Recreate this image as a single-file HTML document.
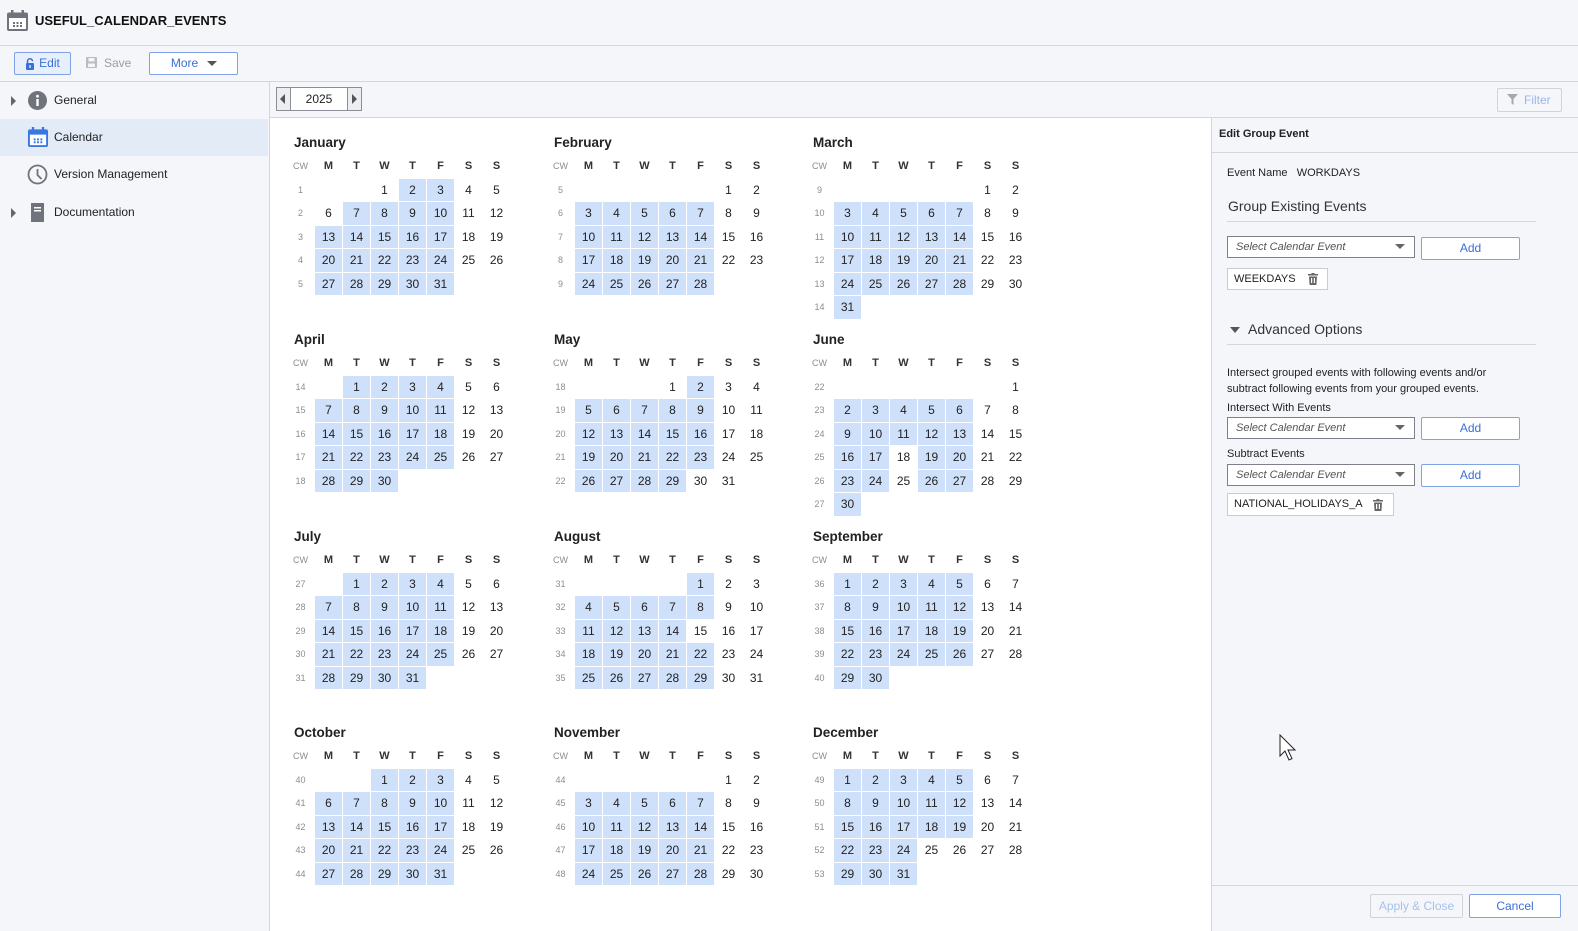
<!DOCTYPE html>
<html><head><meta charset="utf-8">
<style>
*{box-sizing:border-box;margin:0;padding:0}
body{width:1578px;height:931px;overflow:hidden;font-family:"Liberation Sans",sans-serif;color:#222;background:#fff;position:relative;font-size:12px}
.abs{position:absolute}
#top{left:0;top:0;width:1578px;height:46px;background:#f5f6fa;border-bottom:1px solid #d3d6de}
#tb{left:0;top:46px;width:1578px;height:36px;background:#f5f6fa;border-bottom:1px solid #d3d6de}
#side{left:0;top:82px;width:270px;height:849px;background:#f5f6fa;border-right:1px solid #d3d6de}
#strip{left:270px;top:82px;width:1308px;height:36px;background:#f5f6fa;border-bottom:1px solid #d3d6de}
#rp{left:1211px;top:118px;width:367px;height:813px;background:#f5f6fa;border-left:1px solid #d3d6de}
.btn{position:absolute;border:1px solid #7fa3e6;border-radius:2px;background:#fff;color:#3a6fd8;font-size:12px;text-align:center}
.m{position:absolute;width:230px}
.m h3{font-size:13.5px;font-weight:bold;height:20px;line-height:20px;padding-left:7px;color:#222}
.g{display:grid;grid-template-columns:repeat(8,27px);grid-auto-rows:22.5px;gap:1px;margin-top:2px}
.g i,.g em,.g b,.g a{display:block;text-align:center;line-height:22.5px;font-style:normal}
.g i{font-size:9px;color:#8a8d93}
.g em{font-size:11px;font-weight:bold;color:#333}
.g b{font-weight:normal;font-size:12px}
.g a{background:#cfe0fb;font-size:12px;color:#222}
.side-item{position:absolute;left:0;width:268px;height:37px;font-size:12px;line-height:37px;color:#222}
.sel{position:absolute;left:1227px;width:188px;height:22px;border:1px solid #7d8089;background:#fff;font-style:italic;font-size:11px;color:#555;padding-left:8px;line-height:20px}
.sel:after{content:"";position:absolute;right:9px;top:7px;border-left:5px solid transparent;border-right:5px solid transparent;border-top:5px solid #666}
.chip{position:absolute;left:1227px;height:22px;border:1px solid #c9ccd3;background:#fff;font-size:11px;line-height:20px;padding-left:6px}
.lbl{position:absolute;left:1227px;font-size:11px;color:#222}
</style></head><body>
<div id="top" class="abs">
<svg class="abs" style="left:6px;top:10px" width="23" height="22" viewBox="0 0 23 22"><rect x="1" y="2.5" width="21" height="18.5" rx="2" fill="#6f737b"/><rect x="3" y="8" width="17" height="11" fill="#fff"/><rect x="5" y="0" width="2.5" height="5" fill="#6f737b"/><rect x="15.5" y="0" width="2.5" height="5" fill="#6f737b"/><g fill="#6f737b"><rect x="7" y="12" width="2" height="2"/><rect x="10.5" y="12" width="2" height="2"/><rect x="14" y="12" width="2" height="2"/><rect x="7" y="15" width="2" height="2"/><rect x="10.5" y="15" width="2" height="2"/><rect x="14" y="15" width="2" height="2"/></g></svg>
<div class="abs" style="left:35px;top:13px;font-weight:bold;font-size:13px;color:#111">USEFUL_CALENDAR_EVENTS</div>
</div>
<div id="tb" class="abs">
<div class="btn" style="left:14px;top:6px;width:57px;height:23px;background:#e7effc;line-height:21px;padding-left:14px">Edit
<svg class="abs" style="left:10px;top:5px" width="10" height="12" viewBox="0 0 10 12"><path d="M2.5 5V3.3a2.5 2.5 0 0 1 5 0" fill="none" stroke="#3a6fd8" stroke-width="1.5"/><rect x="1" y="5" width="8" height="7" rx="1" fill="#3a6fd8"/><rect x="4.3" y="7" width="1.4" height="3" fill="#e7effc"/></svg></div>
<svg class="abs" style="left:86px;top:11px" width="11" height="11" viewBox="0 0 11 11"><rect x="0" y="0" width="11" height="11" rx="1" fill="#b9bcc2"/><rect x="2.5" y="1" width="6" height="3.5" fill="#f5f6fa"/><rect x="2" y="6.5" width="7" height="3.5" fill="#f5f6fa"/></svg>
<div class="abs" style="left:104px;top:10px;color:#9a9da3;font-size:12px">Save</div>
<div class="btn" style="left:149px;top:6px;width:89px;height:23px;line-height:21px;padding-right:18px">More<span style="position:absolute;left:57px;top:8px;border-left:5px solid transparent;border-right:5px solid transparent;border-top:5px solid #555"></span></div>
</div>
<div id="side" class="abs">
<div class="side-item" style="top:0">
<span style="position:absolute;left:11px;top:14px;border-top:5px solid transparent;border-bottom:5px solid transparent;border-left:5px solid #666"></span>
<svg class="abs" style="left:28px;top:9px" width="19" height="19" viewBox="0 0 19 19"><circle cx="9.5" cy="9.5" r="9.5" fill="#6f737b"/><rect x="8.3" y="8" width="2.4" height="7" fill="#fff"/><circle cx="9.5" cy="5.2" r="1.4" fill="#fff"/></svg>
<span style="position:absolute;left:54px">General</span></div>
<div class="side-item" style="top:37px;background:#e3ebf7">
<svg class="abs" style="left:27px;top:8px" width="22" height="21" viewBox="0 0 23 22"><rect x="1" y="2.5" width="21" height="18.5" rx="2" fill="#3a78e0"/><rect x="3" y="8" width="17" height="11" fill="#fff"/><rect x="5" y="0" width="2.5" height="5" fill="#3a78e0"/><rect x="15.5" y="0" width="2.5" height="5" fill="#3a78e0"/><g fill="#3a78e0"><rect x="7" y="12" width="2" height="2"/><rect x="10.5" y="12" width="2" height="2"/><rect x="14" y="12" width="2" height="2"/><rect x="7" y="15" width="2" height="2"/><rect x="10.5" y="15" width="2" height="2"/><rect x="14" y="15" width="2" height="2"/></g></svg>
<span style="position:absolute;left:54px">Calendar</span></div>
<div class="side-item" style="top:74px">
<svg class="abs" style="left:27px;top:8px" width="21" height="21" viewBox="0 0 21 21"><circle cx="10.5" cy="10.5" r="9" fill="none" stroke="#6f737b" stroke-width="1.8"/><path d="M10.5 5v6l4 4" fill="none" stroke="#6f737b" stroke-width="1.8"/></svg>
<span style="position:absolute;left:54px">Version Management</span></div>
<div class="side-item" style="top:112px">
<span style="position:absolute;left:11px;top:14px;border-top:5px solid transparent;border-bottom:5px solid transparent;border-left:5px solid #666"></span>
<svg class="abs" style="left:30px;top:9px" width="15" height="19" viewBox="0 0 15 19"><path d="M1 0h13v19H1z" fill="#6f737b"/><rect x="4" y="4" width="7" height="1.5" fill="#fff"/><rect x="4" y="7" width="7" height="1.5" fill="#fff"/></svg>
<span style="position:absolute;left:54px">Documentation</span></div>
</div>
<div id="strip" class="abs">
<div class="abs" style="left:6px;top:5px;width:86px;height:24px;border:1px solid #8a8e96;background:#fff">
<div class="abs" style="left:0;top:0;width:14px;height:22px;background:#eceef2;border-right:1px solid #8a8e96"><span style="position:absolute;left:3px;top:6px;border-top:5px solid transparent;border-bottom:5px solid transparent;border-right:5px solid #555"></span></div>
<div class="abs" style="left:14px;width:56px;top:0;line-height:22px;text-align:center;font-size:12px">2025</div>
<div class="abs" style="left:70px;top:0;width:14px;height:22px;background:#eceef2;border-left:1px solid #8a8e96"><span style="position:absolute;left:4px;top:6px;border-top:5px solid transparent;border-bottom:5px solid transparent;border-left:5px solid #555"></span></div>
</div>
<div class="abs" style="left:1227px;top:6px;width:65px;height:24px;border:1px solid #d0d3da;border-radius:2px;color:#9bb6ea;font-size:12px;line-height:22px;padding-left:26px;background:#f5f6fa">Filter
<svg class="abs" style="left:9px;top:5px" width="11" height="11" viewBox="0 0 11 11"><path d="M0 0h11L6.5 5v6L4.5 9.5V5z" fill="#a5a8ae"/></svg></div>
</div>

<div class="m" style="left:287px;top:133px"><h3>January</h3><div class="g"><i>CW</i><em>M</em><em>T</em><em>W</em><em>T</em><em>F</em><em>S</em><em>S</em>
<i>1</i><b style="grid-column:4">1</b><a>2</a><a>3</a><b>4</b><b>5</b>
<i>2</i><b>6</b><a>7</a><a>8</a><a>9</a><a>10</a><b>11</b><b>12</b>
<i>3</i><a>13</a><a>14</a><a>15</a><a>16</a><a>17</a><b>18</b><b>19</b>
<i>4</i><a>20</a><a>21</a><a>22</a><a>23</a><a>24</a><b>25</b><b>26</b>
<i>5</i><a>27</a><a>28</a><a>29</a><a>30</a><a>31</a></div></div>

<div class="m" style="left:547px;top:133px"><h3>February</h3><div class="g"><i>CW</i><em>M</em><em>T</em><em>W</em><em>T</em><em>F</em><em>S</em><em>S</em>
<i>5</i><b style="grid-column:7">1</b><b>2</b>
<i>6</i><a>3</a><a>4</a><a>5</a><a>6</a><a>7</a><b>8</b><b>9</b>
<i>7</i><a>10</a><a>11</a><a>12</a><a>13</a><a>14</a><b>15</b><b>16</b>
<i>8</i><a>17</a><a>18</a><a>19</a><a>20</a><a>21</a><b>22</b><b>23</b>
<i>9</i><a>24</a><a>25</a><a>26</a><a>27</a><a>28</a></div></div>

<div class="m" style="left:806px;top:133px"><h3>March</h3><div class="g"><i>CW</i><em>M</em><em>T</em><em>W</em><em>T</em><em>F</em><em>S</em><em>S</em>
<i>9</i><b style="grid-column:7">1</b><b>2</b>
<i>10</i><a>3</a><a>4</a><a>5</a><a>6</a><a>7</a><b>8</b><b>9</b>
<i>11</i><a>10</a><a>11</a><a>12</a><a>13</a><a>14</a><b>15</b><b>16</b>
<i>12</i><a>17</a><a>18</a><a>19</a><a>20</a><a>21</a><b>22</b><b>23</b>
<i>13</i><a>24</a><a>25</a><a>26</a><a>27</a><a>28</a><b>29</b><b>30</b>
<i>14</i><a>31</a></div></div>

<div class="m" style="left:287px;top:330px"><h3>April</h3><div class="g"><i>CW</i><em>M</em><em>T</em><em>W</em><em>T</em><em>F</em><em>S</em><em>S</em>
<i>14</i><a style="grid-column:3">1</a><a>2</a><a>3</a><a>4</a><b>5</b><b>6</b>
<i>15</i><a>7</a><a>8</a><a>9</a><a>10</a><a>11</a><b>12</b><b>13</b>
<i>16</i><a>14</a><a>15</a><a>16</a><a>17</a><a>18</a><b>19</b><b>20</b>
<i>17</i><a>21</a><a>22</a><a>23</a><a>24</a><a>25</a><b>26</b><b>27</b>
<i>18</i><a>28</a><a>29</a><a>30</a></div></div>

<div class="m" style="left:547px;top:330px"><h3>May</h3><div class="g"><i>CW</i><em>M</em><em>T</em><em>W</em><em>T</em><em>F</em><em>S</em><em>S</em>
<i>18</i><b style="grid-column:5">1</b><a>2</a><b>3</b><b>4</b>
<i>19</i><a>5</a><a>6</a><a>7</a><a>8</a><a>9</a><b>10</b><b>11</b>
<i>20</i><a>12</a><a>13</a><a>14</a><a>15</a><a>16</a><b>17</b><b>18</b>
<i>21</i><a>19</a><a>20</a><a>21</a><a>22</a><a>23</a><b>24</b><b>25</b>
<i>22</i><a>26</a><a>27</a><a>28</a><a>29</a><b>30</b><b>31</b></div></div>

<div class="m" style="left:806px;top:330px"><h3>June</h3><div class="g"><i>CW</i><em>M</em><em>T</em><em>W</em><em>T</em><em>F</em><em>S</em><em>S</em>
<i>22</i><b style="grid-column:8">1</b>
<i>23</i><a>2</a><a>3</a><a>4</a><a>5</a><a>6</a><b>7</b><b>8</b>
<i>24</i><a>9</a><a>10</a><a>11</a><a>12</a><a>13</a><b>14</b><b>15</b>
<i>25</i><a>16</a><a>17</a><b>18</b><a>19</a><a>20</a><b>21</b><b>22</b>
<i>26</i><a>23</a><a>24</a><b>25</b><a>26</a><a>27</a><b>28</b><b>29</b>
<i>27</i><a>30</a></div></div>

<div class="m" style="left:287px;top:527px"><h3>July</h3><div class="g"><i>CW</i><em>M</em><em>T</em><em>W</em><em>T</em><em>F</em><em>S</em><em>S</em>
<i>27</i><a style="grid-column:3">1</a><a>2</a><a>3</a><a>4</a><b>5</b><b>6</b>
<i>28</i><a>7</a><a>8</a><a>9</a><a>10</a><a>11</a><b>12</b><b>13</b>
<i>29</i><a>14</a><a>15</a><a>16</a><a>17</a><a>18</a><b>19</b><b>20</b>
<i>30</i><a>21</a><a>22</a><a>23</a><a>24</a><a>25</a><b>26</b><b>27</b>
<i>31</i><a>28</a><a>29</a><a>30</a><a>31</a></div></div>

<div class="m" style="left:547px;top:527px"><h3>August</h3><div class="g"><i>CW</i><em>M</em><em>T</em><em>W</em><em>T</em><em>F</em><em>S</em><em>S</em>
<i>31</i><a style="grid-column:6">1</a><b>2</b><b>3</b>
<i>32</i><a>4</a><a>5</a><a>6</a><a>7</a><a>8</a><b>9</b><b>10</b>
<i>33</i><a>11</a><a>12</a><a>13</a><a>14</a><b>15</b><b>16</b><b>17</b>
<i>34</i><a>18</a><a>19</a><a>20</a><a>21</a><a>22</a><b>23</b><b>24</b>
<i>35</i><a>25</a><a>26</a><a>27</a><a>28</a><a>29</a><b>30</b><b>31</b></div></div>

<div class="m" style="left:806px;top:527px"><h3>September</h3><div class="g"><i>CW</i><em>M</em><em>T</em><em>W</em><em>T</em><em>F</em><em>S</em><em>S</em>
<i>36</i><a>1</a><a>2</a><a>3</a><a>4</a><a>5</a><b>6</b><b>7</b>
<i>37</i><a>8</a><a>9</a><a>10</a><a>11</a><a>12</a><b>13</b><b>14</b>
<i>38</i><a>15</a><a>16</a><a>17</a><a>18</a><a>19</a><b>20</b><b>21</b>
<i>39</i><a>22</a><a>23</a><a>24</a><a>25</a><a>26</a><b>27</b><b>28</b>
<i>40</i><a>29</a><a>30</a></div></div>

<div class="m" style="left:287px;top:723px"><h3>October</h3><div class="g"><i>CW</i><em>M</em><em>T</em><em>W</em><em>T</em><em>F</em><em>S</em><em>S</em>
<i>40</i><a style="grid-column:4">1</a><a>2</a><a>3</a><b>4</b><b>5</b>
<i>41</i><a>6</a><a>7</a><a>8</a><a>9</a><a>10</a><b>11</b><b>12</b>
<i>42</i><a>13</a><a>14</a><a>15</a><a>16</a><a>17</a><b>18</b><b>19</b>
<i>43</i><a>20</a><a>21</a><a>22</a><a>23</a><a>24</a><b>25</b><b>26</b>
<i>44</i><a>27</a><a>28</a><a>29</a><a>30</a><a>31</a></div></div>

<div class="m" style="left:547px;top:723px"><h3>November</h3><div class="g"><i>CW</i><em>M</em><em>T</em><em>W</em><em>T</em><em>F</em><em>S</em><em>S</em>
<i>44</i><b style="grid-column:7">1</b><b>2</b>
<i>45</i><a>3</a><a>4</a><a>5</a><a>6</a><a>7</a><b>8</b><b>9</b>
<i>46</i><a>10</a><a>11</a><a>12</a><a>13</a><a>14</a><b>15</b><b>16</b>
<i>47</i><a>17</a><a>18</a><a>19</a><a>20</a><a>21</a><b>22</b><b>23</b>
<i>48</i><a>24</a><a>25</a><a>26</a><a>27</a><a>28</a><b>29</b><b>30</b></div></div>

<div class="m" style="left:806px;top:723px"><h3>December</h3><div class="g"><i>CW</i><em>M</em><em>T</em><em>W</em><em>T</em><em>F</em><em>S</em><em>S</em>
<i>49</i><a>1</a><a>2</a><a>3</a><a>4</a><a>5</a><b>6</b><b>7</b>
<i>50</i><a>8</a><a>9</a><a>10</a><a>11</a><a>12</a><b>13</b><b>14</b>
<i>51</i><a>15</a><a>16</a><a>17</a><a>18</a><a>19</a><b>20</b><b>21</b>
<i>52</i><a>22</a><a>23</a><a>24</a><b>25</b><b>26</b><b>27</b><b>28</b>
<i>53</i><a>29</a><a>30</a><a>31</a></div></div>

<div id="rp" class="abs"></div>
<div class="abs" style="left:1219px;top:128px;font-size:11px;font-weight:bold;color:#222">Edit Group Event</div>
<div class="abs" style="left:1212px;top:152px;width:366px;height:1px;background:#d3d6de"></div>
<div class="lbl" style="top:167px">Event Name&nbsp;&nbsp; WORKDAYS</div>
<div class="abs" style="left:1228px;top:198px;font-size:14px;color:#333">Group Existing Events</div>
<div class="abs" style="left:1227px;top:221px;width:309px;height:1px;background:#d3d6de"></div>
<div class="sel" style="top:236px">Select Calendar Event</div>
<div class="btn" style="left:1421px;top:237px;width:99px;height:23px;line-height:21px">Add</div>
<div class="chip" style="top:268px;width:101px">WEEKDAYS
<svg class="abs" style="left:80px;top:4px" width="10" height="12" viewBox="0 0 10 12"><rect x="0" y="1" width="10" height="1.5" fill="#666"/><rect x="3.5" y="0" width="3" height="1.5" fill="#666"/><path d="M1 3.5h8l-.6 8.5H1.6z" fill="#666"/><rect x="3" y="5" width="1.2" height="5" fill="#fff"/><rect x="5.8" y="5" width="1.2" height="5" fill="#fff"/></svg></div>
<span class="abs" style="left:1230px;top:327px;border-left:5px solid transparent;border-right:5px solid transparent;border-top:6px solid #555"></span>
<div class="abs" style="left:1248px;top:321px;font-size:14px;color:#333">Advanced Options</div>
<div class="abs" style="left:1227px;top:344px;width:309px;height:1px;background:#d3d6de"></div>
<div class="lbl" style="top:365px;line-height:16px">Intersect grouped events with following events and/or<br>subtract following events from your grouped events.</div>
<div class="lbl" style="top:402px">Intersect With Events</div>
<div class="sel" style="top:417px">Select Calendar Event</div>
<div class="btn" style="left:1421px;top:417px;width:99px;height:23px;line-height:21px">Add</div>
<div class="lbl" style="top:448px">Subtract Events</div>
<div class="sel" style="top:464px">Select Calendar Event</div>
<div class="btn" style="left:1421px;top:464px;width:99px;height:23px;line-height:21px">Add</div>
<div class="chip" style="top:493px;width:167px;height:23px;line-height:21px">NATIONAL_HOLIDAYS_A
<svg class="abs" style="left:145px;top:5px" width="10" height="12" viewBox="0 0 10 12"><rect x="0" y="1" width="10" height="1.5" fill="#666"/><rect x="3.5" y="0" width="3" height="1.5" fill="#666"/><path d="M1 3.5h8l-.6 8.5H1.6z" fill="#666"/><rect x="3" y="5" width="1.2" height="5" fill="#fff"/><rect x="5.8" y="5" width="1.2" height="5" fill="#fff"/></svg></div>
<div class="abs" style="left:1212px;top:885px;width:366px;height:1px;background:#d3d6de"></div>
<div class="btn" style="left:1370px;top:894px;width:93px;height:24px;line-height:22px;border-color:#d0d3da;color:#a8c0ee;background:#f5f6fa">Apply &amp; Close</div>
<div class="btn" style="left:1469px;top:894px;width:92px;height:24px;line-height:22px">Cancel</div>
<svg class="abs" style="left:1279px;top:734px" width="18" height="28" viewBox="0 0 18 28"><path d="M1 1v21l5-5 4 9 3-1.4-4-8.6h7z" fill="#fff" stroke="#222" stroke-width="1"/></svg>
</body></html>
